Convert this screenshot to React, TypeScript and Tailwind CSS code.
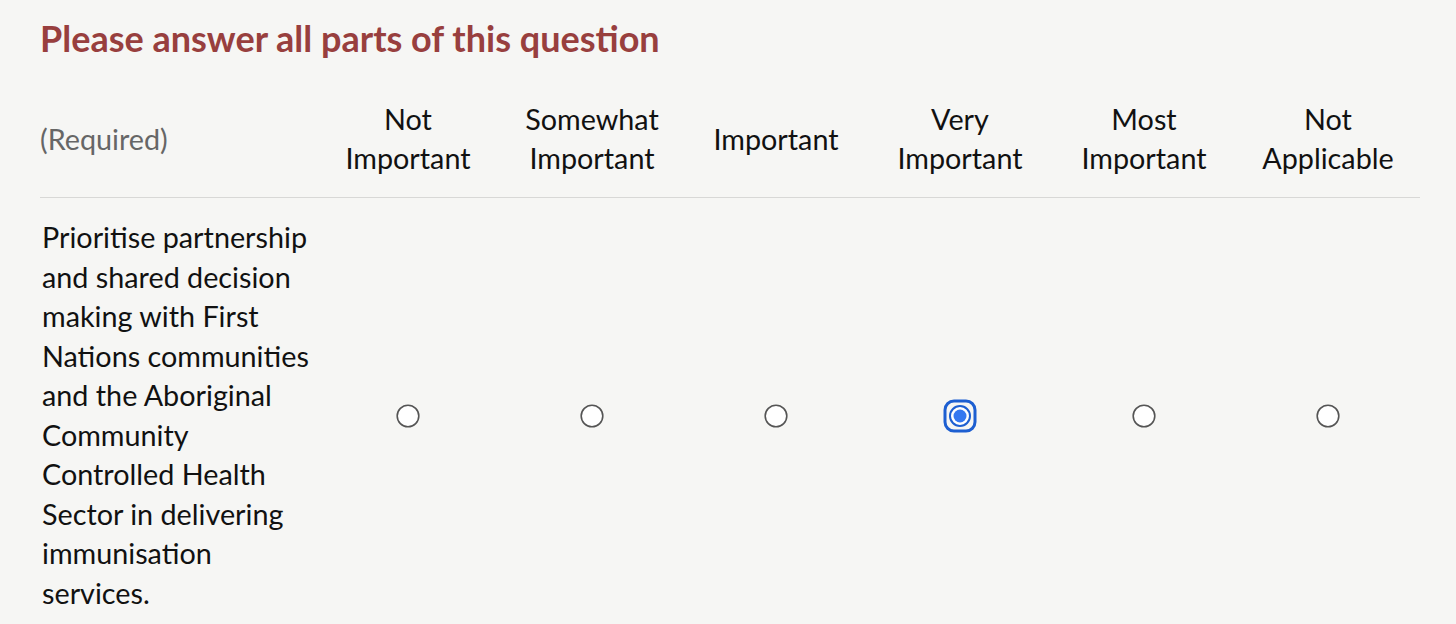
const columns = [
  ['Not', 'Important'],
  ['Somewhat', 'Important'],
  ['Important'],
  ['Very', 'Important'],
  ['Most', 'Important'],
  ['Not', 'Applicable'],
]

function Radio({ checked }: { checked?: boolean }) {
  if (checked) {
    return (
      <svg width="34" height="34" viewBox="0 0 34 34">
        <rect x="2" y="2" width="30" height="30" rx="9" fill="none" stroke="#1d5fd1" strokeWidth="3" />
        <circle cx="17" cy="17" r="10" fill="#fff" stroke="#1d5fd1" strokeWidth="2" />
        <circle cx="17" cy="17" r="6.5" fill="#3478f0" />
      </svg>
    )
  }
  return (
    <svg width="24" height="24" viewBox="0 0 24 24">
      <circle cx="12" cy="12" r="10.8" fill="#fff" stroke="#555" strokeWidth="1.6" />
    </svg>
  )
}

export default function App() {
  return (
    <main
      className="min-h-screen bg-[#f6f6f4] px-10 pt-[18px] text-[#111]"
      style={{ fontFamily: 'Lato, "Noto Sans", sans-serif' }}
    >
      <h1 className="text-[36px] leading-10 font-bold text-[#983f3e]">
        Please answer all parts of this question
      </h1>

      {/* Header row */}
      <div className="mt-[42px] grid w-[1380px] grid-cols-[276px_repeat(6,184px)] items-center border-b border-[#d8d8d6] pb-[19px] text-[28.75px] leading-[39px]">
        <div className="text-[#666]">(Required)</div>
        {columns.map((c, i) => (
          <div key={i} className="text-center">
            {c.map((l) => (
              <div key={l}>{l}</div>
            ))}
          </div>
        ))}
      </div>

      {/* Question row */}
      <div className="grid w-[1380px] grid-cols-[276px_repeat(6,184px)] items-center pt-5 text-[28.75px] leading-[39.5px]">
        <div className="pl-[2px]">
          Prioritise partnership and shared decision making with First Nations communities and the Aboriginal Community Controlled Health Sector in delivering immunisation services.
        </div>
        {columns.map((_, i) => (
          <div key={i} className="flex justify-center">
            <Radio checked={i === 3} />
          </div>
        ))}
      </div>
    </main>
  )
}
